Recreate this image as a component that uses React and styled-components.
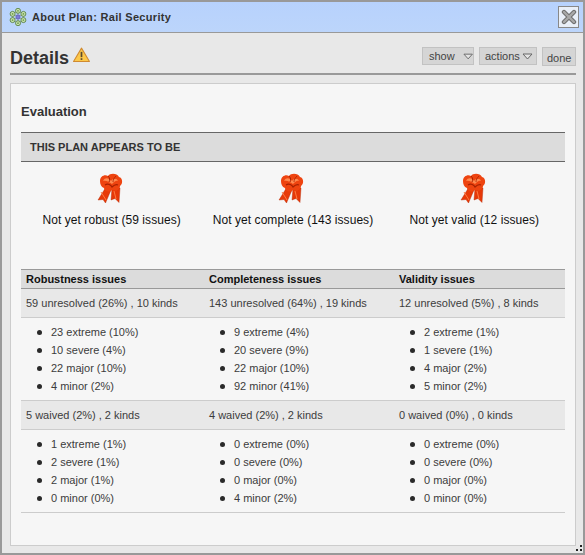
import React from "react";
import styled, { createGlobalStyle } from "styled-components";

const Global = createGlobalStyle`
  html, body { margin: 0; padding: 0; background: #fff; }
  #root { width: 585px; height: 555px; }
`;

const Window = styled.div`
  position: relative;
  box-sizing: border-box;
  width: 585px;
  height: 555px;
  border: 2px solid #999;
  background: #e8e8e8;
  font-family: "Liberation Sans", Arial, sans-serif;
  display: flex;
  flex-direction: column;
`;

const TitleBar = styled.div`
  box-sizing: border-box;
  height: 31px;
  flex: none;
  display: flex;
  align-items: center;
  padding: 0 4px 0 7px;
  background: linear-gradient(#b7d2fd, #b9d3fc 40%, #bcd5fb);
  border-bottom: 1px solid #999;
`;

const Title = styled.div`
  flex: 1;
  margin-left: 5px;
  font-size: 11px;
  font-weight: bold;
  letter-spacing: 0.31px;
  color: #333;
`;

const CloseButton = styled.div`
  box-sizing: border-box;
  width: 21px;
  height: 22px;
  display: flex;
  align-items: center;
  justify-content: center;
  background: #e9eff8;
  border: 1px solid #888;
`;

const Body = styled.div`
  flex: 1;
  display: flex;
  flex-direction: column;
  padding: 0 7px 7px 8px;
  min-height: 0;
`;

const Header = styled.div`
  box-sizing: border-box;
  height: 42px;
  flex: none;
  display: flex;
  align-items: flex-start;
  border-bottom: 2px solid #999;
`;

const Heading = styled.h1`
  margin: 14px 0 0;
  font-size: 18px;
  line-height: 22px;
  font-weight: bold;
  color: #333;
`;

const WarnIcon = styled.svg`
  margin: 14px 0 0 4px;
`;

const Actions = styled.div`
  margin-left: auto;
  margin-top: 14px;
  display: flex;
  align-items: flex-start;
  gap: 5px;
`;

const ToolButton = styled.div`
  box-sizing: border-box;
  height: ${(p) => (p.$tall ? 19 : 18)}px;
  width: ${(p) => p.$w}px;
  display: flex;
  align-items: ${(p) => (p.$tall ? "flex-end" : "center")};
  padding-left: ${(p) => p.$pad}px;
  padding-bottom: ${(p) => (p.$tall ? 1 : 0)}px;
  gap: ${(p) => p.$gap}px;
  background: #d5d5d5;
  border: 1px solid #c2c2c2;
  font-size: 11px;
  color: #444;
`;

const Panel = styled.div`
  box-sizing: border-box;
  margin-top: 8px;
  flex: 1;
  min-height: 0;
  background: #f6f6f6;
  border: 1px solid #ccc;
  padding: 19px 10px 0;
`;

const SectionTitle = styled.h2`
  margin: 0;
  font-size: 13px;
  line-height: 17px;
  font-weight: bold;
  color: #333;
`;

const Band = styled.div`
  box-sizing: border-box;
  margin-top: 12px;
  height: 30px;
  display: flex;
  align-items: center;
  padding-left: 9px;
  background: #dcdcdc;
  border-top: 1px solid #666;
  border-bottom: 1px solid #666;
  font-size: 11px;
  font-weight: bold;
  color: #333;
`;

const Verdicts = styled.div`
  display: grid;
  grid-template-columns: repeat(3, 1fr);
  padding-top: 11px;
  height: 96px;
`;

const Verdict = styled.div`
  display: flex;
  flex-direction: column;
  align-items: center;
  font-size: 12px;
  letter-spacing: 0.06px;
  color: #111;
`;

const MedalIcon = styled.svg`
  margin-right: 3px;
`;

const VerdictLabel = styled.div`
  margin-top: 8px;
  line-height: 14px;
`;

const Grid = styled.div`
  display: grid;
  grid-template-columns: 183px 190px 171px;
  border-bottom: 1px solid #ccc;
`;

const Head = styled.div`
  box-sizing: border-box;
  height: 20px;
  padding-left: 5px;
  display: flex;
  align-items: center;
  background: #dcdcdc;
  border-top: 1px solid #999;
  border-bottom: 1px solid #999;
  font-size: 11px;
  font-weight: bold;
  color: #111;
`;

const Summary = styled.div`
  box-sizing: border-box;
  padding-left: 5px;
  display: flex;
  align-items: center;
  background: #e8e8e8;
  border-bottom: 1px solid #ccc;
  border-top: ${(p) => (p.$topLine ? "1px solid #ccc" : "none")};
  height: ${(p) => (p.$topLine ? 30 : 29)}px;
  font-size: 11px;
  color: #3c3c3c;
  white-space: pre;
`;

const Levels = styled.ul`
  margin: 0;
  padding: 5px 0 5px 30px;
  list-style: none;
`;

const Level = styled.li`
  position: relative;
  height: 18px;
  line-height: 18px;
  font-size: 11px;
  color: #3c3c3c;
  &::before {
    content: "";
    position: absolute;
    left: -14px;
    top: 7px;
    width: 5px;
    height: 5px;
    border-radius: 50%;
    background: #2a2a2a;
  }
`;

const Grip = styled.svg`
  position: absolute;
  right: 0;
  bottom: 0;
`;

const Caret = () => (
  <svg width="11" height="7" viewBox="0 0 11 7">
    <path d="M1 1H10L5.5 6Z" fill="#e4e4e4" stroke="#666" strokeWidth="1" />
  </svg>
);

const Logo = () => (
  <svg width="18" height="18" viewBox="0 0 18 18">
    <g stroke="#8a9a8a" strokeWidth="0.7" fill="none">
      <path d="M9 3L14.2 6V12L9 15L3.8 12V6Z" />
      <path d="M9 3V15M3.8 6L14.2 12M3.8 12L14.2 6" />
    </g>
    {[[9, 2.8], [14.4, 5.9], [14.4, 12.1], [9, 15.2], [3.6, 12.1], [3.6, 5.9]].map(([x, y], i) => (
      <g key={i}>
        <circle cx={x} cy={y} r="2.5" fill="#c9e0b0" stroke="#4c7a35" strokeWidth="0.8" />
        <circle cx={x} cy={y} r="0.9" fill="#6ea04a" />
      </g>
    ))}
    <circle cx="9" cy="9" r="2.2" fill="#7c7cd8" stroke="#4a4aa0" strokeWidth="0.5" />
  </svg>
);

const Medal = () => (
  <MedalIcon width="26" height="32" viewBox="0 0 26 32">
    <path d="M9 14L1 27L6 26.5L8.5 30L14 17Z" fill="#e83a08" stroke="#b02400" strokeWidth="0.4" />
    <path d="M15 15L14 27L18 25.5L22 29.5L23 15Z" fill="#e63808" stroke="#b02400" strokeWidth="0.4" />
    <path d="M4 19L9 27" stroke="#ff7a40" strokeWidth="1" fill="none" />
    <path d="M17 18L19 26" stroke="#ff7a40" strokeWidth="1" fill="none" />
    <path d="M3 8C3 3 8 1 11 3C13 0 20 0 22 4C26 5 26 11 23 13C23 17 18 19 15 17C12 20 7 18 7 15C4 14 3 11 3 8Z" fill="#ee4410" />
    <path d="M6 8C8 4 12 5 14 8C16 5 20 5 21 8C19 7 17 9 15 11C12 9 9 7 6 8Z" fill="#ff8a50" />
    <path d="M8 12C11 10 14 12 15 14C17 12 19 11 21 12" fill="none" stroke="#a82200" strokeWidth="1.2" />
    <path d="M11 3C13 5 13 7 12 9" fill="none" stroke="#a82200" strokeWidth="1" />
    <path d="M19 3C17 5 16 7 16 9" fill="none" stroke="#a82200" strokeWidth="0.8" />
  </MedalIcon>
);

const verdicts = ["Not yet robust (59 issues)", "Not yet complete (143 issues)", "Not yet valid (12 issues)"];

const columns = [
  {
    title: "Robustness issues",
    unresolved: "59 unresolved (26%) , 10 kinds",
    open: ["23 extreme (10%)", "10 severe (4%)", "22 major (10%)", "4 minor (2%)"],
    waived: "5 waived (2%) , 2 kinds",
    closed: ["1 extreme (1%)", "2 severe (1%)", "2 major (1%)", "0 minor (0%)"],
  },
  {
    title: "Completeness issues",
    unresolved: "143 unresolved (64%) , 19 kinds",
    open: ["9 extreme (4%)", "20 severe (9%)", "22 major (10%)", "92 minor (41%)"],
    waived: "4 waived (2%) , 2 kinds",
    closed: ["0 extreme (0%)", "0 severe (0%)", "0 major (0%)", "4 minor (2%)"],
  },
  {
    title: "Validity issues",
    unresolved: "12 unresolved (5%) , 8 kinds",
    open: ["2 extreme (1%)", "1 severe (1%)", "4 major (2%)", "5 minor (2%)"],
    waived: "0 waived (0%) , 0 kinds",
    closed: ["0 extreme (0%)", "0 severe (0%)", "0 major (0%)", "0 minor (0%)"],
  },
];

export default function App() {
  return (
    <Window>
      <Global />
      <TitleBar>
        <Logo />
        <Title>About Plan: Rail Security</Title>
        <CloseButton>
          <svg width="16" height="16" viewBox="0 0 16 16">
            <path d="M3 3L13 13M13 3L3 13" stroke="#6e6e6e" strokeWidth="4.4" strokeLinecap="round" />
            <path d="M3 3L13 13M13 3L3 13" stroke="#a9a9a9" strokeWidth="2.4" strokeLinecap="round" />
          </svg>
        </CloseButton>
      </TitleBar>
      <Body>
        <Header>
          <Heading>Details</Heading>
          <WarnIcon width="17" height="15" viewBox="0 0 16 14">
            <path d="M8 1L15.5 13.5H.5Z" fill="#fcc84a" stroke="#d08a30" strokeWidth="1" strokeLinejoin="round" />
            <rect x="7.2" y="4.5" width="1.6" height="5" fill="#5a4a30" />
            <rect x="7.2" y="10.5" width="1.6" height="1.6" fill="#5a4a30" />
          </WarnIcon>
          <Actions>
            <ToolButton $w={52} $pad={6} $gap={8}>show <Caret /></ToolButton>
            <ToolButton $w={58} $pad={5} $gap={2}>actions <Caret /></ToolButton>
            <ToolButton $w={34} $pad={4} $gap={0} $tall>done</ToolButton>
          </Actions>
        </Header>
        <Panel>
          <SectionTitle>Evaluation</SectionTitle>
          <Band>THIS PLAN APPEARS TO BE</Band>
          <Verdicts>
            {verdicts.map((v) => (
              <Verdict key={v}>
                <Medal />
                <VerdictLabel>{v}</VerdictLabel>
              </Verdict>
            ))}
          </Verdicts>
          <Grid>
            {columns.map((c) => <Head key={c.title}>{c.title}</Head>)}
            {columns.map((c) => <Summary key={c.title}>{c.unresolved}</Summary>)}
            {columns.map((c) => (
              <Levels key={c.title}>{c.open.map((t) => <Level key={t}>{t}</Level>)}</Levels>
            ))}
            {columns.map((c) => <Summary key={c.title} $topLine>{c.waived}</Summary>)}
            {columns.map((c) => (
              <Levels key={c.title}>{c.closed.map((t) => <Level key={t}>{t}</Level>)}</Levels>
            ))}
          </Grid>
        </Panel>
      </Body>
      <Grip width="10" height="8" viewBox="0 0 10 8">
        <rect x="7" y="0" width="2" height="2" fill="#222" />
        <rect x="3" y="4" width="2" height="2" fill="#222" />
        <rect x="7" y="4" width="2" height="2" fill="#222" />
      </Grip>
    </Window>
  );
}
